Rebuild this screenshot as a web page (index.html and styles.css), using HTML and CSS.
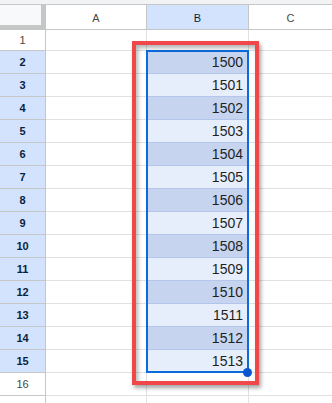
FILE: index.html
```html
<!DOCTYPE html>
<html>
<head>
<meta charset="utf-8">
<link rel="stylesheet" href="styles.css">
</head>
<body>
<div class="sheet">
  <div class="topstrip"></div>
  <div class="grid">
    <div class="corner"></div>
    <div class="colhead">A</div>
    <div class="colhead sel">B</div>
    <div class="colhead last">C</div>

    <div class="rowhead r1">1</div><div class="cell r1"></div><div class="cell r1"></div><div class="cell last r1"></div>

    <div class="rowhead sel">2</div><div class="cell"></div><div class="cell val dark">1500</div><div class="cell last"></div>
    <div class="rowhead sel">3</div><div class="cell"></div><div class="cell val light">1501</div><div class="cell last"></div>
    <div class="rowhead sel">4</div><div class="cell"></div><div class="cell val dark">1502</div><div class="cell last"></div>
    <div class="rowhead sel">5</div><div class="cell"></div><div class="cell val light">1503</div><div class="cell last"></div>
    <div class="rowhead sel">6</div><div class="cell"></div><div class="cell val dark">1504</div><div class="cell last"></div>
    <div class="rowhead sel">7</div><div class="cell"></div><div class="cell val light">1505</div><div class="cell last"></div>
    <div class="rowhead sel">8</div><div class="cell"></div><div class="cell val dark">1506</div><div class="cell last"></div>
    <div class="rowhead sel">9</div><div class="cell"></div><div class="cell val light">1507</div><div class="cell last"></div>
    <div class="rowhead sel">10</div><div class="cell"></div><div class="cell val dark">1508</div><div class="cell last"></div>
    <div class="rowhead sel">11</div><div class="cell"></div><div class="cell val light">1509</div><div class="cell last"></div>
    <div class="rowhead sel">12</div><div class="cell"></div><div class="cell val dark">1510</div><div class="cell last"></div>
    <div class="rowhead sel">13</div><div class="cell"></div><div class="cell val light">1511</div><div class="cell last"></div>
    <div class="rowhead sel">14</div><div class="cell"></div><div class="cell val dark">1512</div><div class="cell last"></div>
    <div class="rowhead sel">15</div><div class="cell"></div><div class="cell val light">1513</div><div class="cell last"></div>

    <div class="rowhead">16</div><div class="cell"></div><div class="cell"></div><div class="cell last"></div>
    <div class="rowhead">17</div><div class="cell"></div><div class="cell"></div><div class="cell last"></div>
  </div>
  <div class="selection"></div>
  <div class="handle"></div>
  <div class="annot"></div>
</div>
</body>
</html>
```

FILE: styles.css
```css
html, body {
  margin: 0;
  padding: 0;
  background: #ffffff;
}
body {
  font-family: "Liberation Sans", Arial, sans-serif;
  overflow: hidden;
  width: 332px;
  height: 403px;
}
.sheet {
  position: relative;
  width: 332px;
  height: 403px;
  overflow: hidden;
}
.topstrip {
  height: 4px;
  background: #f1f3f4;
  border-bottom: 1px solid #c7c7c7;
}
.grid {
  display: grid;
  grid-template-columns: 46px 101px 102px 1fr;
  grid-template-rows: 25px 21px repeat(14, 23px) 23px 23px;
}
.grid > div {
  box-sizing: border-box;
  border-right: 1px solid #e1e1e1;
  border-bottom: 1px solid #e1e1e1;
  display: flex;
  align-items: center;
}
.corner {
  background: #f8f9fa;
  position: relative;
  border-right: 1px solid #c4c7c5 !important;
  border-bottom: 1px solid #c4c7c5 !important;
}
.corner::after {
  content: "";
  position: absolute;
  right: 0;
  bottom: 0;
  width: 4px;
  height: 24px;
  background: #c4c7c5;
}
.corner::before {
  content: "";
  position: absolute;
  left: 0;
  bottom: 0;
  width: 45px;
  height: 4px;
  background: #c4c7c5;
}
.colhead {
  justify-content: center;
  font-size: 11px;
  color: #444746;
  background: #ffffff;
  border-bottom: 1px solid #c4c7c5 !important;
  border-right: 1px solid #c4c7c5 !important;
  padding-top: 1px;
}
.colhead.sel {
  background: #d3e3fd;
  color: #0b1f3f;
}
.colhead.last {
  border-right: none !important;
}
.rowhead {
  justify-content: center;
  font-size: 11px;
  color: #444746;
  background: #ffffff;
  border-right: 1px solid #c4c7c5 !important;
  border-bottom: 1px solid #c4c7c5 !important;
}
.rowhead.sel {
  background: #d3e3fd;
  color: #0b1f3f;
  font-weight: bold;
}
.cell.last {
  border-right: none;
}
.val {
  justify-content: flex-end;
  padding-right: 5px;
  font-size: 14px;
  color: #1f1f1f;
  border-bottom-color: #b3c6ea !important;
}
.val.dark {
  background: #c6d4ef;
}
.val.light {
  background: #e6eefb;
}
.selection {
  position: absolute;
  left: 146px;
  top: 50px;
  width: 103px;
  height: 323px;
  box-sizing: border-box;
  border: 2px solid #0b6bdc;
}
.handle {
  position: absolute;
  left: 243px;
  top: 368px;
  width: 9px;
  height: 9px;
  border-radius: 50%;
  background: #0b57d0;
}
.annot {
  position: absolute;
  left: 132px;
  top: 41px;
  width: 127px;
  height: 344px;
  box-sizing: border-box;
  border: 4px solid #f0474a;
  box-shadow: 2px 3px 4px rgba(0, 0, 0, 0.35), inset 2px 3px 4px rgba(0, 0, 0, 0.3);
}
```
